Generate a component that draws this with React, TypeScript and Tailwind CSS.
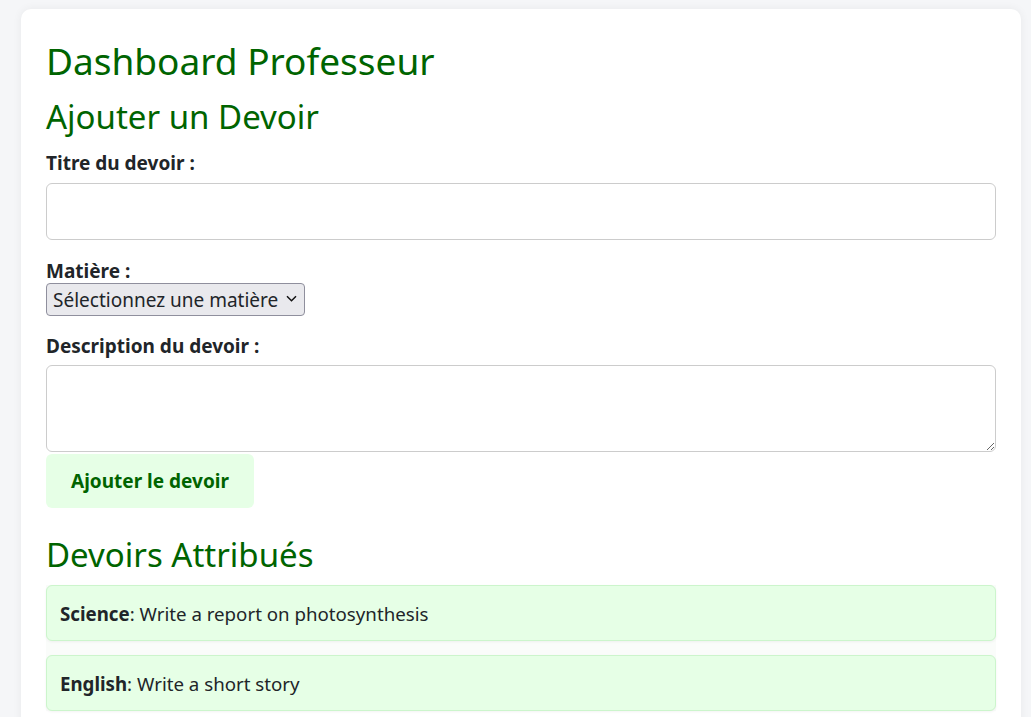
export default function App() {
  const devoirs = [
    { matiere: "Science", description: "Write a report on photosynthesis" },
    { matiere: "English", description: "Write a short story" },
  ];

  return (
    <div
      className="min-h-[717px] bg-[#f5f6f8] pl-[21px] pt-[9px] text-[#212529]"
      style={{ fontFamily: '"Noto Sans", "Open Sans", sans-serif' }}
    >
      <div className="w-[1000px] rounded-[10px] bg-white px-[25px] pt-[28px] pb-[25px] shadow-[0_0_10px_rgba(0,0,0,0.06)]">
        <h1 className="text-[37px] leading-[48px] text-[#006400]">Dashboard Professeur</h1>
        <h2 className="mt-[12px] text-[33px] leading-[40px] text-[#006400]">Ajouter un Devoir</h2>

        <form className="mt-[14px]" onSubmit={(e) => e.preventDefault()}>
          <label className="block text-[19px] font-bold leading-[24px]">Titre du devoir :</label>
          <input
            type="text"
            className="mt-[8px] block h-[57px] w-full rounded-[6px] border border-[#cccccc] px-3"
          />

          <label className="mt-[19px] block text-[19px] font-bold leading-[24px]">Matière :</label>
          <div className="relative w-[259px]">
            <select className="block h-[33px] w-full appearance-none rounded-[4px] border border-[#8f8f9d] bg-[#e9e9ed] pl-[6px] text-[19px] leading-[24px]">
              <option>Sélectionnez une matière</option>
              <option>Science</option>
              <option>English</option>
            </select>
            <svg
              className="pointer-events-none absolute right-[8px] top-[12px]"
              width="11"
              height="7"
              viewBox="0 0 11 7"
              fill="none"
            >
              <path d="M1 1.2 L5.5 5.7 L10 1.2" stroke="#111" strokeWidth="1.5" />
            </svg>
          </div>

          <label className="mt-[18px] block text-[19px] font-bold leading-[24px]">
            Description du devoir :
          </label>
          <textarea className="mt-[7px] block h-[87px] w-full rounded-[6px] border border-[#cccccc] px-3 py-2" />

          <button
            type="submit"
            className="mt-[2px] h-[54px] w-[208px] rounded-[6px] bg-[#e6ffe6] pt-[1px] text-[19px] font-bold text-[#006400]"
          >
            Ajouter le devoir
          </button>
        </form>

        <h2 className="mt-[27px] text-[33px] leading-[40px] text-[#006400]">Devoirs Attribués</h2>
        <ul className="mt-[10px] bg-[#fafcfa]">
          {devoirs.map((d) => (
            <li
              key={d.matiere}
              className="mb-[14px] flex h-[56px] items-center rounded-[6px] border border-[#ccf5cc] bg-[#e6ffe6] px-[13px] pt-[3px] text-[18.7px] shadow-[0_1px_3px_rgba(0,0,0,0.05)]"
            >
              <span>
                <strong>{d.matiere}</strong>: {d.description}
              </span>
            </li>
          ))}
        </ul>
      </div>
    </div>
  );
}
